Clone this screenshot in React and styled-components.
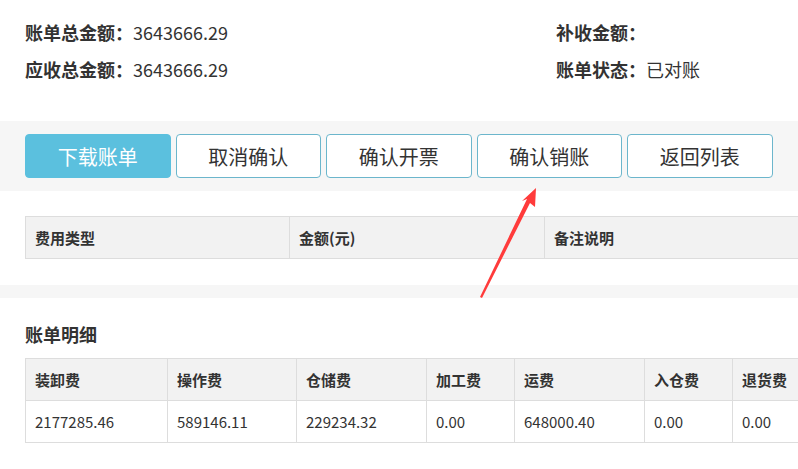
import React from 'react';
import styled, { createGlobalStyle } from 'styled-components';

const GlobalStyle = createGlobalStyle`
  html, body {
    margin: 0;
    padding: 0;
    background: #fff;
    overflow: hidden;
  }
  body {
    font-family: "Noto Sans CJK SC", "Noto Sans", sans-serif;
    color: #333;
  }
`;

const Page = styled.div`
  position: relative;
  width: 798px;
  height: 469px;
  overflow: hidden;
`;

const InfoSection = styled.section`
  display: grid;
  grid-template-columns: 531px auto;
  grid-auto-rows: 37px;
  padding: 13px 0 34px 25px;
`;

const InfoItem = styled.div`
  display: flex;
  align-items: center;
  font-size: 18px;
  white-space: nowrap;
`;

const InfoLabel = styled.span`
  font-weight: bold;
  color: #333;
`;

const InfoValue = styled.span`
  color: #333;
`;

const Toolbar = styled.div`
  display: flex;
  gap: 5px;
  padding: 13px 25px;
  background: #f6f6f6;
`;

const Button = styled.button`
  width: 145.5px;
  height: 44px;
  box-sizing: border-box;
  border-radius: 4px;
  border: 1px solid ${p => (p.primary ? '#5bc0de' : '#6cb6cc')};
  background: ${p => (p.primary ? '#5bc0de' : '#fff')};
  color: ${p => (p.primary ? '#fff' : '#333')};
  font-family: "Noto Sans CJK SC", sans-serif;
  font-size: 20px;
  padding: 0;
  cursor: pointer;
`;

const Block = styled.section`
  padding: ${p => p.pad || '25px 0 26px 25px'};
`;

const Separator = styled.div`
  height: 13px;
  background: #f6f6f6;
`;

const Heading = styled.h3`
  margin: 0 0 12px;
  font-size: 18px;
  line-height: 24px;
  font-weight: bold;
  color: #333;
`;

const Table = styled.table`
  border-collapse: collapse;
  table-layout: fixed;
  width: ${p => p.width}px;
  font-size: 15px;
`;

const Th = styled.th`
  height: 42px;
  box-sizing: border-box;
  padding: 0 9px;
  background: #f2f2f2;
  border: 1px solid #ddd;
  text-align: left;
  font-weight: bold;
  color: #333;
  white-space: nowrap;
`;

const Td = styled.td`
  height: 42px;
  box-sizing: border-box;
  padding: 0 9px;
  border: 1px solid #ddd;
  color: #333;
  white-space: nowrap;
`;

const Arrow = styled.svg`
  position: absolute;
  left: 0;
  top: 0;
  pointer-events: none;
`;

const buttons = ['下载账单', '取消确认', '确认开票', '确认销账', '返回列表'];

const feeCols = [264, 255, 300];

const detail = [
  { name: '装卸费', value: '2177285.46', w: 142 },
  { name: '操作费', value: '589146.11', w: 129 },
  { name: '仓储费', value: '229234.32', w: 130 },
  { name: '加工费', value: '0.00', w: 88 },
  { name: '运费', value: '648000.40', w: 130 },
  { name: '入仓费', value: '0.00', w: 88 },
  { name: '退货费', value: '0.00', w: 88 },
];

export default function App() {
  return (
    <Page>
      <GlobalStyle />
      <InfoSection>
        <InfoItem>
          <InfoLabel>账单总金额：</InfoLabel>
          <InfoValue>3643666.29</InfoValue>
        </InfoItem>
        <InfoItem>
          <InfoLabel>补收金额：</InfoLabel>
        </InfoItem>
        <InfoItem>
          <InfoLabel>应收总金额：</InfoLabel>
          <InfoValue>3643666.29</InfoValue>
        </InfoItem>
        <InfoItem>
          <InfoLabel>账单状态：</InfoLabel>
          <InfoValue>已对账</InfoValue>
        </InfoItem>
      </InfoSection>

      <Toolbar>
        {buttons.map((b, i) => (
          <Button key={b} primary={i === 0}>
            {b}
          </Button>
        ))}
      </Toolbar>

      <Block>
        <Table width={feeCols.reduce((a, b) => a + b, 0)}>
          <colgroup>
            {feeCols.map((w, i) => (
              <col key={i} style={{ width: w }} />
            ))}
          </colgroup>
          <thead>
            <tr>
              <Th>费用类型</Th>
              <Th>金额(元)</Th>
              <Th>备注说明</Th>
            </tr>
          </thead>
        </Table>
      </Block>

      <Separator />

      <Block pad="24px 0 0 25px">
        <Heading>账单明细</Heading>
        <Table width={detail.reduce((a, c) => a + c.w, 0)}>
          <colgroup>
            {detail.map(c => (
              <col key={c.name} style={{ width: c.w }} />
            ))}
          </colgroup>
          <thead>
            <tr>
              {detail.map(c => (
                <Th key={c.name}>{c.name}</Th>
              ))}
            </tr>
          </thead>
          <tbody>
            <tr>
              {detail.map(c => (
                <Td key={c.name}>{c.value}</Td>
              ))}
            </tr>
          </tbody>
        </Table>
      </Block>

      <Arrow width="798" height="469" viewBox="0 0 798 469">
        <polygon
          points="480,297 527,199 522,201 536,188 535,207 530,203 482,298"
          fill="#ff3b3b"
        />
      </Arrow>
    </Page>
  );
}
